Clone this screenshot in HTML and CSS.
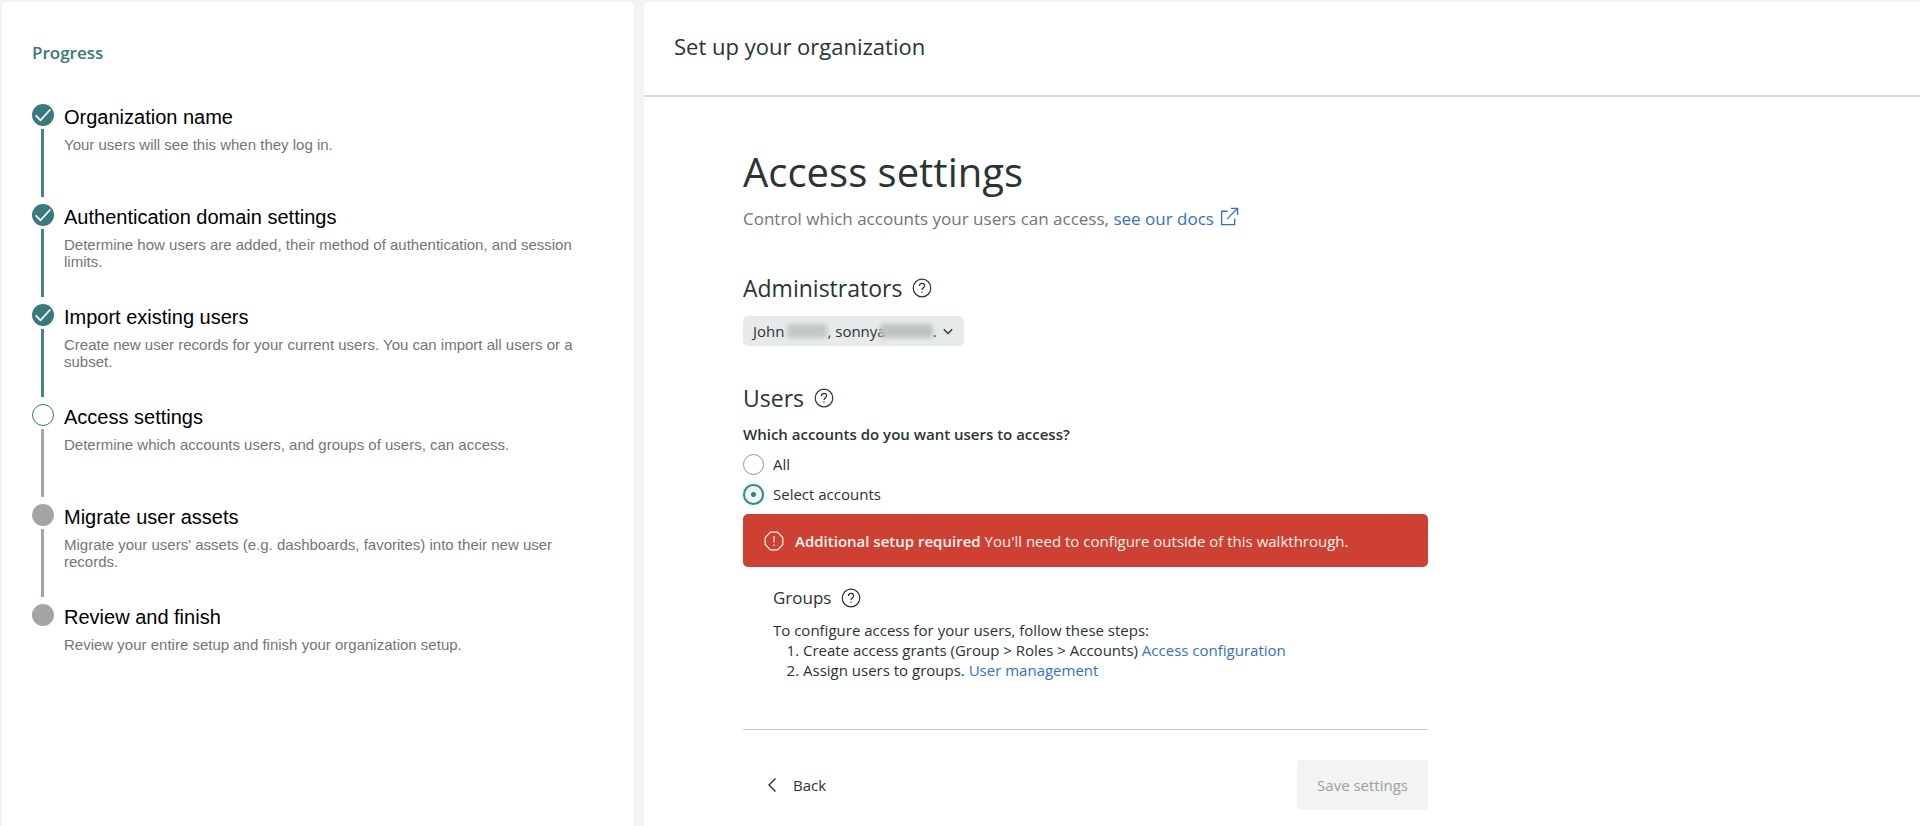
FILE: index.html
```html
<!DOCTYPE html>
<html lang="en">
<head>
<meta charset="utf-8">
<title>Set up your organization</title>
<link rel="stylesheet" href="styles.css">
</head>
<body>
<svg class="sprite" aria-hidden="true">
  <symbol id="check" viewBox="0 0 24 24"><path d="M4 12.5l5.2 5.2L20 6" fill="none" stroke="currentColor" stroke-width="1.8"/></symbol>
  <symbol id="help" viewBox="0 0 20 20"><g fill="none" stroke="currentColor" stroke-width="1.2"><circle cx="10" cy="10" r="8.8"/><path d="M7.4 7.9C7.4 6.2 8.500 5.300 10 5.300s2.600.9 2.600 2.400c0 1.900-2.600 2.100-2.600 4.200"/><path d="M10 13.400v1.400"/></g></symbol>
</svg>
<div class="app">
  <aside class="sidebar">
    <h2 class="progress-title">Progress</h2>
    <ol class="steps">
      <li class="step done"><span class="marker"><svg class="check"><use href="#check"/></svg></span>
        <div class="step-text"><h3>Organization name</h3><p>Your users will see this when they log in.</p></div></li>
      <li class="step done"><span class="marker"><svg class="check"><use href="#check"/></svg></span>
        <div class="step-text"><h3>Authentication domain settings</h3><p>Determine how users are added, their method of authentication, and session limits.</p></div></li>
      <li class="step done"><span class="marker"><svg class="check"><use href="#check"/></svg></span>
        <div class="step-text"><h3>Import existing users</h3><p>Create new user records for your current users. You can import all users or a subset.</p></div></li>
      <li class="step current"><span class="marker"></span>
        <div class="step-text"><h3>Access settings</h3><p>Determine which accounts users, and groups of users, can access.</p></div></li>
      <li class="step"><span class="marker"></span>
        <div class="step-text"><h3>Migrate user assets</h3><p>Migrate your users' assets (e.g. dashboards, favorites) into their new user records.</p></div></li>
      <li class="step"><span class="marker"></span>
        <div class="step-text"><h3>Review and finish</h3><p>Review your entire setup and finish your organization setup.</p></div></li>
    </ol>
  </aside>
  <main class="main">
    <header class="header">Set up your organization</header>
    <div class="content">
      <h1>Access settings</h1>
      <p class="lead">Control which accounts your users can access, <a href="#docs">see our docs<svg class="external" viewBox="0 0 20 20"><path d="M8 4.500H1.700V18.500H15.500V12M11.500 1.500H18.500V8.500M18.500 1.500L7.500 12.500" fill="none" stroke="currentColor" stroke-width="1.400"/></svg></a></p>

      <h2 class="section">Administrators <button class="help" type="button" aria-label="About administrators"><svg><use href="#help"/></svg></button></h2>
      <button class="picker" type="button"><span>John</span><span class="redacted first"></span><span>, sonnya</span><span class="redacted second"></span><span>.</span><svg class="chevron" viewBox="0 0 10 10"><path d="M1.500 3.500L5 7l3.500-3.500" fill="none" stroke="currentColor" stroke-width="1.200"/></svg></button>

      <h2 class="section users">Users <button class="help" type="button" aria-label="About users"><svg><use href="#help"/></svg></button></h2>
      <fieldset class="choices">
        <legend>Which accounts do you want users to access?</legend>
        <label><input type="radio" name="accounts">All</label>
        <label><input type="radio" name="accounts" checked>Select accounts</label>
      </fieldset>

      <div class="alert" role="alert">
        <svg viewBox="0 0 20 20"><path d="M6.500 1.200h7l5.300 5.300v7l-5.300 5.300h-7L1.200 13.500v-7zM10 5v6.500M10 13.400v1.600" fill="none" stroke="currentColor" stroke-width="1.200"/></svg>
        <p><strong>Additional setup required</strong> You'll need to configure outside of this walkthrough.</p>
      </div>

      <section class="groups">
        <h3>Groups <button class="help" type="button" aria-label="About groups"><svg><use href="#help"/></svg></button></h3>
        <p>To configure access for your users, follow these steps:</p>
        <ol>
          <li>Create access grants (Group &gt; Roles &gt; Accounts) <a href="#access">Access configuration</a></li>
          <li>Assign users to groups. <a href="#users">User management</a></li>
        </ol>
      </section>

      <footer class="actions">
        <button class="back" type="button"><svg viewBox="0 0 10 16"><path d="M8.500 1.500L2 8l6.500 6.500" fill="none" stroke="currentColor" stroke-width="1.400"/></svg>Back</button>
        <button class="save" type="button" disabled>Save settings</button>
      </footer>
    </div>
  </main>
</div>
</body>
</html>
```
FILE: styles.css
```css
* { box-sizing: border-box; }
body, h1, h2, h3, p, ol { margin: 0; padding: 0; }
body {
  background: #f3f3f3;
  color: #2a3434;
  font-family: "Open Sans", sans-serif;
  font-size: 15px;
  line-height: 20px;
}
button { font: inherit; color: inherit; border: 0; background: none; padding: 0; }
a { color: #3470c8; text-decoration: none; }
.sprite { display: none; }

.app {
  display: grid;
  grid-template-columns: 158fr 319fr;
  gap: 10px;
  min-height: 100vh;
  padding: 2px 0 0 2px;
}
.sidebar { background: #fff; border-radius: 4px 4px 0 0; padding: 39px 30px 0; }
.progress-title { color: #357c7b; font-size: 17px; line-height: 24px; font-weight: 600; }
.steps { list-style: none; margin-top: 39px; font-family: "Liberation Sans", Arial, sans-serif; }
.step { position: relative; display: flex; gap: 10px; min-height: 100px; }
.marker { flex: none; width: 22px; height: 22px; border-radius: 50%; background: #a3a5a5; color: #fff; }
.done .marker { background: #387a80; }
.current .marker { background: #fff; border: 1px solid #357c7b; }
.check { display: block; width: 22px; height: 22px; }
.step:not(:last-child)::after {
  content: "";
  position: absolute;
  left: 9px;
  top: 25px;
  bottom: 7px;
  width: 3px;
  background: #a5a5a5;
}
.step.done::after { background: #458480; }
.step-text { padding-top: 1px; }
.step h3 { color: #000; font-size: 20px; line-height: 24px; font-weight: 400; }
.step p { margin-top: 7px; max-width: 520px; color: #717777; font-size: 15px; line-height: 17px; }

.main { background: #fff; border-radius: 4px 0 0 0; }
.header { padding: 28px 30px 33px; border-bottom: 2px solid #d9dbdb; font-size: 22px; line-height: 32px; }
.content { width: 685px; max-width: 90%; margin-left: 99px; padding: 47px 0 16px; }
h1 { font-size: 40px; line-height: 56px; font-weight: 400; }
.lead { margin-top: 7px; color: #707777; font-size: 17px; line-height: 24px; }
.external { width: 19px; height: 19px; margin-left: 6px; vertical-align: -1px; }
.section { display: flex; align-items: center; gap: 10px; margin-top: 41px; font-size: 23px; line-height: 32px; font-weight: 400; }
.section.users { margin-top: 36px; }
.help, .help svg { display: block; width: 20px; height: 20px; }
.picker { display: flex; align-items: center; height: 30px; margin-top: 12px; padding: 0 10px; border-radius: 5px; background: #e7eaea; }
.redacted { height: 14px; border-radius: 3px; background: #c3c7c7; filter: blur(2px); }
.first { width: 40px; margin-left: 3px; }
.second { width: 53px; margin-left: -6px; background: #bfc3c3; }
.chevron { width: 12px; height: 12px; margin-left: 5px; }
.choices { margin: 10px 0 0; padding: 0; border: 0; }
.choices legend { padding: 0; font-weight: 600; }
.choices label { display: flex; align-items: center; gap: 9px; height: 30px; }
.choices legend + label { margin-top: 5px; }
.choices input { appearance: none; width: 21px; height: 21px; margin: 0; border: 1px solid #8e9595; border-radius: 50%; background: #fff; }
.choices input:checked {
  border: 2px solid #458480;
  background: #edf5f5 radial-gradient(circle, #357c7b 2px, transparent 3px);
  box-shadow: 0 0 4px #8ff0e8;
}
.alert { display: flex; align-items: center; gap: 11px; min-height: 53px; margin-top: 5px; padding: 16px 21px; border-radius: 5px; background: #ce4032; color: #fff5f0; }
.alert svg { width: 20px; height: 20px; }
.alert strong { font-weight: 600; }
.groups { padding: 18px 30px 0; }
.groups h3 { display: flex; align-items: center; gap: 10px; font-size: 17px; line-height: 26px; font-weight: 400; }
.groups p { margin-top: 9px; }
.groups ol { padding-left: 30px; }
.actions { display: flex; align-items: center; justify-content: space-between; margin-top: 49px; padding-top: 30px; border-top: 1px solid #c6c9c9; }
.back { display: flex; align-items: center; gap: 16px; padding: 14px 24px; }
.back svg { width: 10px; height: 16px; }
.save { padding: 15px 20px; border-radius: 4px; background: #f2f3f3; color: #9ba0a0; }
```
